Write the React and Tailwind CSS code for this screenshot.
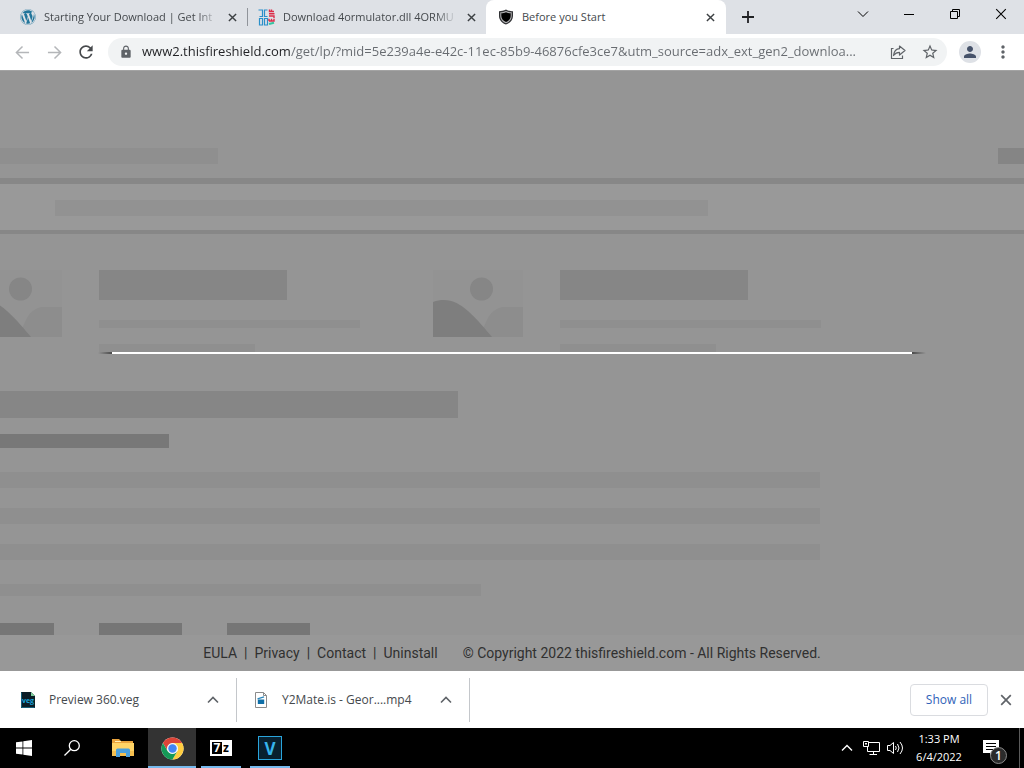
import { FaWordpress } from "react-icons/fa";
import { MdLock, MdPerson, MdStarBorder, MdMoreVert, MdRefresh } from "react-icons/md";

function Cross({ className }) {
  return (
    <svg viewBox="0 0 10 10" className={className} fill="none" stroke="currentColor" aria-hidden="true">
      <path d="M1 1l8 8M9 1l-8 8" />
    </svg>
  );
}

function Arrow({ className }) {
  return (
    <svg viewBox="0 0 16 16" className={className} fill="none" stroke="currentColor" strokeWidth="1.6" aria-hidden="true">
      <path d="M15 8H2M8 1.5L1.5 8L8 14.5" />
    </svg>
  );
}

function Chevron({ className, strokeWidth = 1.5 }) {
  return (
    <svg viewBox="0 0 12 8" className={className} fill="none" stroke="currentColor" strokeWidth={strokeWidth} aria-hidden="true">
      <path d="M1 6.5L6 1.5L11 6.5" />
    </svg>
  );
}

function FileSiteIcon() {
  return (
    <svg viewBox="0 0 17 17" className="size-[17px] shrink-0" fill="none" aria-hidden="true">
      <path d="M.5 1H4.500V7.500H1.500M9.500 1H6.500V7.500H9.500M4.500 9.500H1.500V16H4.500V9M6.500 9V16H9.500V9.500H7" stroke="#2a8fca" strokeWidth="1.200" />
      <path d="M11.500 .5V2.500H16M13.500 .5V2.500M11 4.700H16.500M11 7H16V9M11 12H16V9.800M13.500 9.800V12M11 9.800V12" stroke="#dc2c48" strokeWidth="1.400" />
      <path d="M11 15L16 13.800" stroke="#35c4a0" strokeWidth="2" />
    </svg>
  );
}

function ShieldIcon() {
  return (
    <svg viewBox="0 0 16 16" className="size-4 shrink-0" aria-hidden="true">
      <path d="M8 .5C10 1.800 13 2.200 15 2.200V7C15 11 12 14.200 8 15.500C4 14.200 1 11 1 7V2.200C3 2.200 6 1.800 8 .5Z" fill="#303134" />
      <path d="M8 2C9.500 2.800 12 3.300 13.700 3.300V7C13.700 10.500 11 13.200 8 14.200C5 13.200 2.300 10.500 2.300 7V3.300C4 3.300 6.500 2.800 8 2Z" fill="#b4b4b6" />
      <path d="M8 3.200C9.500 4 11.200 4.300 12.700 4.300V7C12.700 9.800 10.500 12 8 13C5.500 12 3.300 9.800 3.300 7V4.300C4.800 4.300 6.500 4 8 3.200Z" fill="#000" />
    </svg>
  );
}

function TabStrip() {
  return (
    <header className="flex h-[34px] items-stretch bg-[#dee1e6] text-[11px] text-[#45494d]">
      <div className="flex w-[247px] items-center gap-2 pr-2 pl-5">
        <FaWordpress className="size-4 shrink-0 text-[#21759b]" />
        <button className="min-w-0 flex-1 text-left whitespace-nowrap [mask-image:linear-gradient(to_right,#000_88%,transparent)]">
          Starting Your Download | Get Int
        </button>
        <button aria-label="Close tab" className="p-0.5 text-[#3c4043]">
          <Cross className="size-[9px] stroke-[1.6]" />
        </button>
      </div>
      <div className="my-2 w-px bg-[#90949a]" />
      <div className="flex w-[238px] items-center gap-2 pr-2 pl-2.5">
        <FileSiteIcon />
        <button className="min-w-0 flex-1 text-left whitespace-nowrap [mask-image:linear-gradient(to_right,#000_88%,transparent)]">
          Download 4ormulator.dll 4ORMU
        </button>
        <button aria-label="Close tab" className="p-0.5 text-[#3c4043]">
          <Cross className="size-[9px] stroke-[1.6]" />
        </button>
      </div>
      <div className="flex w-[240px] items-center gap-2 rounded-t-lg bg-white pr-[9px] pl-3">
        <ShieldIcon />
        <button className="min-w-0 flex-1 text-left whitespace-nowrap">Before you Start</button>
        <button aria-label="Close tab" className="p-0.5 text-[#3c4043]">
          <Cross className="size-[9px] stroke-[1.6]" />
        </button>
      </div>
      <button aria-label="New tab" className="ml-3 self-center p-1 text-[#202124]">
        <svg viewBox="0 0 12 12" className="size-3" stroke="currentColor" strokeWidth="1.800" aria-hidden="true">
          <path d="M6 0V12M0 6H12" />
        </svg>
      </button>
      <div className="ml-auto flex h-7 text-black">
        <button aria-label="Search tabs" className="flex w-[46px] items-center justify-center">
          <Chevron className="h-2 w-3 rotate-180" strokeWidth={1} />
        </button>
        <button aria-label="Minimize" className="flex w-[46px] items-center justify-center">
          <span className="h-px w-2.5 bg-black" />
        </button>
        <button aria-label="Restore" className="flex w-[46px] items-center justify-center">
          <svg viewBox="0 0 10 10" className="size-2.5" fill="none" stroke="currentColor" aria-hidden="true">
            <path d="M.5 2.500H7.500V9.500H.5ZM2.500 2.500V.5H9.500V7.500H7.500" />
          </svg>
        </button>
        <button aria-label="Close" className="flex w-[46px] items-center justify-center">
          <Cross className="size-3 stroke-[0.9]" />
        </button>
      </div>
    </header>
  );
}

function Toolbar() {
  return (
    <nav className="flex h-[37px] items-center border-b border-[#a3a3a3] bg-white pr-3 pl-[15px] text-[#5f6368]">
      <button aria-label="Back" className="text-[#b4b6b9]">
        <Arrow className="size-[15px]" />
      </button>
      <button aria-label="Forward" className="ml-[17px] text-[#b4b6b9]">
        <Arrow className="size-[15px] rotate-180" />
      </button>
      <button aria-label="Reload" className="ml-3.5 text-[#46494c]">
        <MdRefresh className="size-5" />
      </button>
      <div className="ml-3 flex h-7 min-w-0 flex-1 items-center rounded-full bg-[#f1f3f4] pr-2 pl-[11px]">
        <MdLock className="size-[14px] shrink-0" />
        <input
          aria-label="Address"
          readOnly
          className="ml-[9px] min-w-0 flex-1 bg-[linear-gradient(to_right,#202124_149px,#676b70_149px)] bg-clip-text text-[13px] text-ellipsis text-transparent outline-none"
          value="www2.thisfireshield.com/get/lp/?mid=5e239a4e-e42c-11ec-85b9-46876cfe3ce7&utm_source=adx_ext_gen2_downloa..."
        />
        <button aria-label="Share this page" className="ml-2">
          <svg viewBox="0 0 16 16" className="size-4" fill="none" stroke="currentColor" strokeWidth="1.200" aria-hidden="true">
            <path d="M3.500 4.500H1.500V14.500H12.500V11.500" />
            <path d="M9.500 2L15 6.500L9.500 11V8.300C6.500 8.300 5 9.500 3.500 11.500C4 7.500 6 4.900 9.500 4.700Z" strokeLinejoin="round" />
          </svg>
        </button>
        <button aria-label="Bookmark this page" className="ml-[15px]">
          <MdStarBorder className="size-[18px]" />
        </button>
      </div>
      <button aria-label="Profile" className="ml-3 flex size-[22px] items-center justify-center rounded-full bg-[#dee1e6] text-[#46526a]">
        <MdPerson className="size-[18px]" />
      </button>
      <button aria-label="Menu" className="-mr-px ml-3">
        <MdMoreVert className="size-5" />
      </button>
    </nav>
  );
}

function PicturePlaceholder() {
  return (
    <svg viewBox="0 0 90 67" className="h-[67px] w-[90px] shrink-0" aria-hidden="true">
      <rect width="90" height="67" rx="1" fill="#939393" />
      <path d="M46 67L54 50C57 43 63 38 70 37H90V67Z" fill="#8d8d8d" />
      <circle cx="48.500" cy="19" r="11.500" fill="#868686" />
      <path d="M0 32C14 27 25 32 35 41C46 51 53 60 59 67H0Z" fill="#7e7e7e" />
    </svg>
  );
}

function CardPlaceholder() {
  return (
    <div className="flex w-[461px] shrink-0 items-start gap-[37px]">
      <PicturePlaceholder />
      <div>
        <div className="h-[30px] w-[188px] bg-[#868686]" />
        <div className="mt-5 h-2 w-[261px] bg-[#8f8f8f]" />
        <div className="mt-4 h-2 w-[156px] bg-[#8f8f8f]" />
      </div>
    </div>
  );
}

function LandingPage() {
  return (
    <main className="relative flex flex-1 flex-col overflow-hidden bg-[#959595]">
      <div className="flex items-center justify-between pt-[77px]">
        <div className="h-4 w-[218px] bg-[#8f8f8f]" />
        <div className="h-4 w-[26px] bg-[#858585]" />
      </div>
      <div className="mt-3.5 border-t-6 border-b-4 border-[#878787] bg-[#999] pt-4 pb-3.5 pl-[55px]">
        <div className="h-4 w-[653px] bg-[#929292]" />
      </div>
      <div className="-ml-7 flex pt-9">
        <CardPlaceholder />
        <CardPlaceholder />
      </div>
      <div className="mt-[39px] h-[27px] w-[458px] bg-[#868686]" />
      <div className="mt-4 h-3.5 w-[169px] bg-[#787878]" />
      <div className="mt-6 flex flex-col gap-5">
        <div className="h-4 w-[820px] bg-[#8f8f8f]" />
        <div className="h-4 w-[820px] bg-[#8f8f8f]" />
        <div className="h-4 w-[820px] bg-[#8f8f8f]" />
      </div>
      <div className="mt-6 h-3 w-[481px] bg-[#8f8f8f]" />
      <div className="mt-[27px] flex gap-[45px]">
        <div className="h-3 w-[54px] bg-[#767676]" />
        <div className="h-3 w-[83px] bg-[#767676]" />
        <div className="h-3 w-[83px] bg-[#767676]" />
      </div>
      <footer className="mt-auto flex h-9 items-center justify-center gap-[25px] bg-[#989898] font-[Roboto,sans-serif] text-[14px] text-[#303030]">
        <div className="flex gap-[7px]">
          <a href="#eula">EULA</a>
          <span>|</span>
          <a href="#privacy">Privacy</a>
          <span>|</span>
          <a href="#contact">Contact</a>
          <span>|</span>
          <a href="#uninstall">Uninstall</a>
        </div>
        <p>© Copyright 2022 thisfireshield.com - All Rights Reserved.</p>
      </footer>
      <div className="absolute inset-x-[98px] top-[281px] flex h-0.5">
        <div className="w-3.5 bg-linear-to-r from-transparent to-[#4a4a4a]" />
        <div className="flex-1 bg-white" />
        <div className="w-3.5 bg-linear-to-l from-transparent to-[#4a4a4a]" />
      </div>
    </main>
  );
}

function DownloadItem({ icon, name }) {
  return (
    <div className="flex items-center border-r border-[#c4c7cb] pr-[17px]">
      {icon}
      <a href="#download" className="ml-[13px] text-[12px] whitespace-nowrap text-[#45494d]">{name}</a>
      <button aria-label={`Options for ${name}`} className="ml-auto text-[#5f6368]">
        <Chevron className="h-2 w-3" strokeWidth={1.6} />
      </button>
    </div>
  );
}

function DownloadBar() {
  return (
    <section aria-label="Downloads" className="flex h-[57px] items-center bg-white">
      <div className="grid h-11 grid-cols-[237px_233px]">
        <DownloadItem
          name="Preview 360.veg"
          icon={
            <svg viewBox="0 0 16 16" className="ml-5 size-4" aria-hidden="true">
              <path d="M1 0H11L15 4V16H1Z" fill="#0b1d26" />
              <path d="M11 0V4H15Z" fill="#7dcf9c" />
              <path d="M1.500 .5V15.500H14.500" fill="none" stroke="#165f78" />
              <text x="8" y="10.500" textAnchor="middle" fontSize="7" fontWeight="700" fill="#19a5dc" fontFamily="Open Sans, sans-serif">veg</text>
            </svg>
          }
        />
        <DownloadItem
          name="Y2Mate.is - Geor....mp4"
          icon={
            <svg viewBox="0 0 16 16" className="ml-4 size-4" aria-hidden="true">
              <path d="M2.500 .5H10.500L13.500 3.500V15.500H2.500Z" fill="#fff" stroke="#8b8b8b" />
              <path d="M10.500 .5V3.500H13.500" fill="none" stroke="#8b8b8b" />
              <path d="M4.800 7.500H11.200V12H4.800Z" fill="#0f6fa8" />
              <path d="M4.500 6.800L11 4.800" stroke="#2a86bb" strokeWidth="1.400" />
            </svg>
          }
        />
      </div>
      <button className="ml-auto h-8 w-[78px] rounded border border-[#dadce0] text-[12px] font-medium text-[#2f62b8]">Show all</button>
      <button aria-label="Close downloads" className="mr-3 ml-3 text-[#5f6368]">
        <Cross className="size-3 stroke-[1.4]" />
      </button>
    </section>
  );
}

function TaskButton({ label, children, className = "" }) {
  return (
    <button aria-label={label} className={`flex h-10 w-12 items-center justify-center ${className}`}>
      {children}
    </button>
  );
}

function Taskbar() {
  return (
    <footer className="flex h-10 items-center bg-black text-white">
      <div className="flex">
        <TaskButton label="Start">
          <svg viewBox="0 0 16 16" className="size-4" fill="#fff" aria-hidden="true">
            <path d="M0 2.300L6.500 1.400V7.600H0ZM7.300 1.300L16 0V7.600H7.300ZM0 8.400H6.500V14.600L0 13.700ZM7.300 8.400H16V16L7.300 14.700Z" />
          </svg>
        </TaskButton>
        <TaskButton label="Search">
          <svg viewBox="0 0 16 16" className="size-4" fill="none" stroke="#fff" strokeWidth="1.300" aria-hidden="true">
            <circle cx="10.300" cy="5.700" r="5" />
            <path d="M6.800 9.200L.5 15.500" />
          </svg>
        </TaskButton>
      </div>
      <div className="ml-[3px] flex gap-px">
        <TaskButton label="File Explorer">
          <svg viewBox="0 0 22 18" className="h-[18px] w-[22px]" aria-hidden="true">
            <path d="M0 0H7L9 2H21V7H0Z" fill="#e8a33d" />
            <path d="M3 2H9V3H3Z" fill="#fff1b8" />
            <path d="M0 4H22V17H0Z" fill="#ffd466" />
            <path d="M0 12H22V17H0Z" fill="#f5bf4f" />
            <path d="M4 18V11Q4 9.500 5.500 9.500H16.500Q18 9.500 18 11V18H14V14H8V18Z" fill="#4a9fdc" />
          </svg>
        </TaskButton>
        <TaskButton label="Google Chrome" className="border-b-2 border-[#76b9ed] bg-[#333] pt-0.5">
          <svg viewBox="0 0 48 48" className="size-[23px]" aria-hidden="true">
            <circle cx="24" cy="24" r="23" fill="#fff" />
            <path d="M4.080 12.500A23 23 0 0 1 43.920 12.500H24A11.500 11.500 0 0 0 14.040 29.750Z" fill="#dc4437" />
            <path d="M43.920 12.500A23 23 0 0 1 24 47L33.960 29.750A11.500 11.500 0 0 0 24 12.500Z" fill="#ffcd40" />
            <path d="M24 47A23 23 0 0 1 4.080 12.500L14.040 29.750A11.500 11.500 0 0 0 33.960 29.750Z" fill="#159957" />
            <circle cx="24" cy="24" r="11" fill="#f1f1f1" />
            <circle cx="24" cy="24" r="8.800" fill="#4285f4" />
          </svg>
        </TaskButton>
        <div className="px-1">
          <button aria-label="7-Zip" className="flex h-10 w-10 items-center justify-center border-b-2 border-[#76b9ed] pt-0.5">
            <span className="flex h-4 w-[22px] items-center bg-white p-0.5 leading-none font-bold">
              <span className="flex h-full w-2.5 items-center justify-center bg-black text-[12px] text-white">7</span>
              <span className="flex-1 text-center text-[12px] text-black">z</span>
            </span>
          </button>
        </div>
        <div className="px-1">
          <button aria-label="Vegas" className="flex h-10 w-10 items-center justify-center border-b-2 border-[#76b9ed] pt-0.5">
            <span className="flex size-6 items-center justify-center border border-[#2aa5dc] bg-[#08202f] text-[17px] leading-none font-bold text-[#36b4ec]">V</span>
          </button>
        </div>
      </div>
      <div className="ml-auto flex items-center">
        <button aria-label="Show hidden icons">
          <Chevron className="h-2 w-3" strokeWidth={1.4} />
        </button>
        <svg viewBox="0 0 17 14" className="ml-2.5 h-3.5 w-[17px]" fill="none" stroke="#fff" aria-hidden="true">
          <path d="M6 1.500H16.500V10.500H4.500V6M10.500 10.500V13.500M6.500 13.500H14M.5 .5H5.500V5.500H.5ZM2 2.500H4M3 2.500V4" />
        </svg>
        <svg viewBox="0 0 17 14" className="ml-[7px] h-3.5 w-[17px]" fill="none" stroke="#fff" aria-hidden="true">
          <path d="M.5 4.500H3L6.500 1.500V12.500L3 9.500H.5ZM8.500 5Q10 7 8.500 9M10.500 3Q13.500 7 10.500 11M13 1Q18 7 13 13" />
        </svg>
        <time className="ml-[7px] w-[56px] text-center text-[11px] leading-[18px] whitespace-nowrap">
          1:33 PM
          <br />
          6/4/2022
        </time>
        <button aria-label="Notifications" className="relative ml-4 h-10 w-6">
          <svg viewBox="0 0 16 16" className="size-4" aria-hidden="true">
            <path d="M0 0H16V13H10L7 16V13H0Z" fill="#fff" />
            <path d="M3 3.500H13M3 6.500H13M3 9.500H10" stroke="#000" />
          </svg>
          <span className="absolute right-0 bottom-1 flex size-[17px] items-center justify-center rounded-full border border-[#8a8a8a] bg-[#2b2b2b] text-[12px] leading-none font-semibold">1</span>
        </button>
        <div className="mr-1 ml-3 h-10 w-px bg-[#5a5a5a]" />
      </div>
    </footer>
  );
}

export default function App() {
  return (
    <div className="flex min-h-screen flex-col font-['Open_Sans','Noto_Sans',sans-serif]">
      <TabStrip />
      <Toolbar />
      <LandingPage />
      <DownloadBar />
      <Taskbar />
    </div>
  );
}
